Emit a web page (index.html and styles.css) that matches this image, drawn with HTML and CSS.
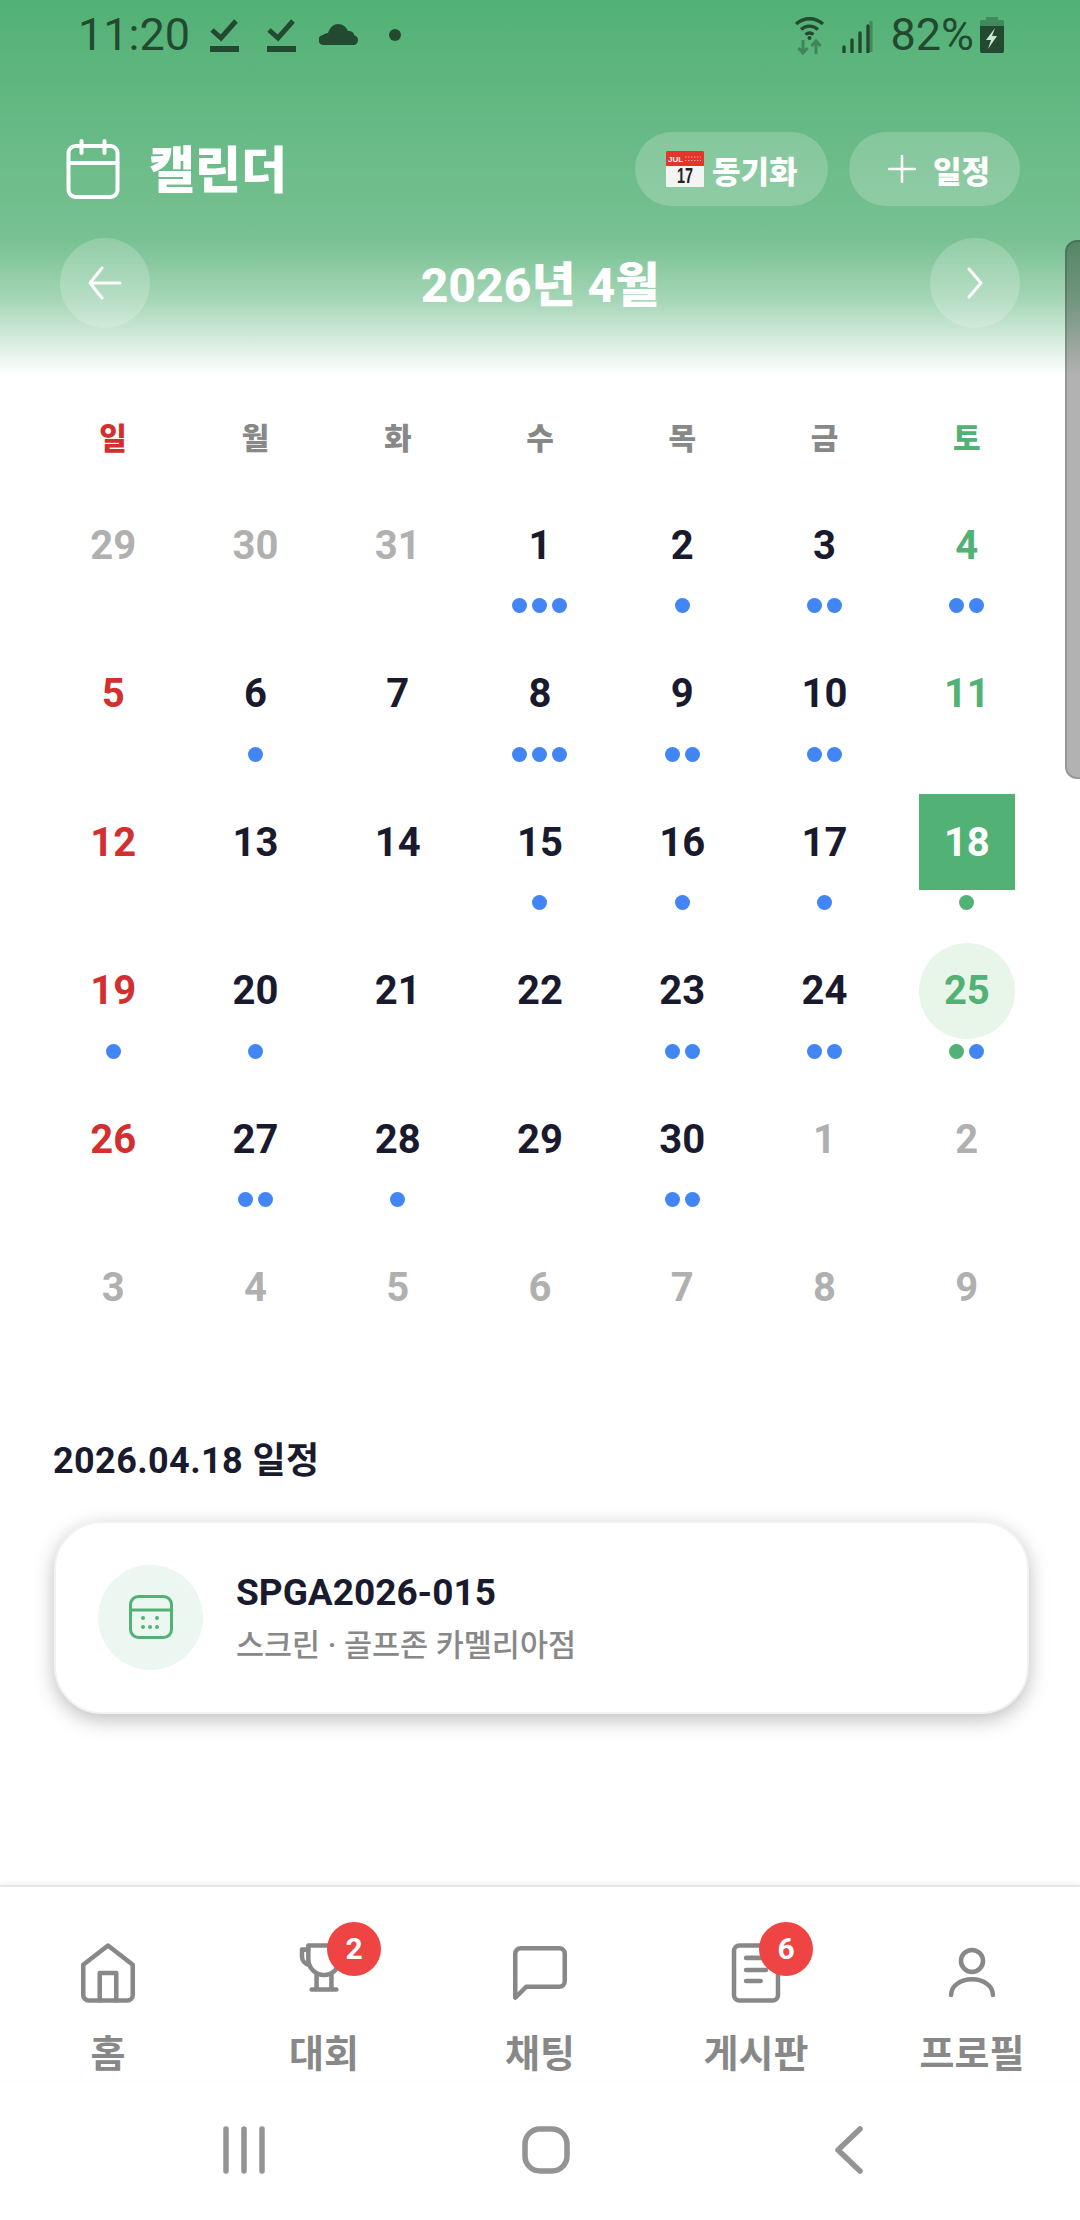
FILE: index.html
```html
<!DOCTYPE html>
<html lang="ko">
<head>
    <meta charset="UTF-8">
    <meta name="viewport" content="width=device-width, initial-scale=1.0">
    <link rel="stylesheet" href="styles.css">
    <title>캘린더</title>
</head>
<body>
    <div class="page">
        <div class="scrollbar"></div>
        <header class="header">
            <div class="status">
                <span class="time">11:20</span>
                <svg class="st_check" viewBox="0 0 29 34"><path d="M2 12l9 8L26 3" fill="none" stroke="#234a30" stroke-width="5"/><rect y="28" width="29" height="6" fill="#234a30"/></svg>
                <svg class="st_check" viewBox="0 0 29 34"><path d="M2 12l9 8L26 3" fill="none" stroke="#234a30" stroke-width="5"/><rect y="28" width="29" height="6" fill="#234a30"/></svg>
                <svg class="st_cloud" viewBox="0 0 39 21"><path d="M5 21a5 5 0 0 1-1-10 c1-1 3-2 5-2 C11 3 15 0 19 0c5 0 8 3 10 7 4 0 6 2 6 4 3 1 4 3 4 5 0 3-2 5-5 5z" fill="#234a30"/></svg>
                <span class="st_dot"></span>
                <span class="st_space"></span>
                <svg class="st_wifi" viewBox="0 0 31 40">
                    <path d="M2 9c8-7 19-7 27 0M7 14.500c5-4.500 12-4.500 17 0M11.500 19.500c2.500-2 5.500-2 8 0" fill="none" stroke="#234a30" stroke-width="3.400"/>
                    <circle cx="15.500" cy="23" r="2" fill="#234a30"/>
                    <path d="M9 25v13M4.500 33l4.500 5 4.500-5M22 39V26M17.500 31l4.500-5 4.500 5" fill="none" stroke="#234a30" stroke-width="3" opacity="0.450"/>
                </svg>
                <svg class="st_signal" viewBox="0 0 31 34">
                    <g fill="none" stroke="#234a30" stroke-width="3.400" stroke-linecap="round">
                        <path d="M2 33v-5M10 33V21M18 33V14M26 33V7"/>
                    </g>
                    <path d="M29 33V2" fill="none" stroke="#234a30" stroke-width="3" opacity="0.400"/>
                </svg>
                <span class="percent">82%</span>
                <svg class="st_battery" viewBox="0 0 24 36">
                    <path d="M6 0h12v3h4a2 2 0 0 1 2 2v5H0V5a2 2 0 0 1 2-2h4z" fill="#234a30" opacity="0.400"/>
                    <path d="M0 9h24v25a2 2 0 0 1-2 2H2a2 2 0 0 1-2-2z" fill="#234a30"/>
                    <path d="M15 11l-9 12h5l-3 9 9-13h-5l3-8z" fill="#c9e8d3"/>
                </svg>
            </div>

            <div class="head_row">
                <svg class="head_icon" viewBox="0 0 53 60">
                    <g fill="none" stroke="#fff" stroke-width="4" stroke-linecap="round">
                        <rect x="2" y="7" width="49" height="51" rx="7"/>
                        <path d="M2 24h49M15 2v12M38 2v12"/>
                    </g>
                </svg>
                <h1 class="head_title">캘린더</h1>
                <button class="head_btn sync">
                    <svg class="emoji" viewBox="0 0 38 36">
                        <rect width="38" height="36" rx="1" fill="#f4f4f2"/>
                        <path d="M0 1a1 1 0 0 1 1-1h36a1 1 0 0 1 1 1v14H0z" fill="#e5352b"/>
                        <text x="2" y="11" class="emoji_mon">JUL</text>
                        <path d="M19 6h16M19 9.500h16" stroke="#f6a9a2" stroke-width="1" stroke-dasharray="1.500 1.500"/>
                        <text x="19" y="32" class="emoji_day" textLength="16" lengthAdjust="spacingAndGlyphs">17</text>
                    </svg>
                    동기화
                </button>
                <button class="head_btn add">
                    <svg class="plus" viewBox="0 0 28 28"><path d="M14 1v26M1 14h26" stroke="#fff" stroke-width="2.500" stroke-linecap="round"/></svg>
                    일정
                </button>
            </div>

            <div class="month_row">
                <button class="month_btn">
                    <svg viewBox="0 0 34 34"><path d="M32 17H3M14 2L2 17l12 15" fill="none" stroke="#fff" stroke-width="3" stroke-linecap="round" stroke-linejoin="round"/></svg>
                </button>
                <h2 class="month_title">2026년 4월</h2>
                <button class="month_btn">
                    <svg viewBox="0 0 34 34"><path d="M11 3l12 14-12 14" fill="none" stroke="#fff" stroke-width="3" stroke-linecap="round" stroke-linejoin="round"/></svg>
                </button>
            </div>
        </header>

        <main class="main">
            <section class="calendar">
                <div class="week">
                    <span class="sun">일</span><span>월</span><span>화</span><span>수</span><span>목</span><span>금</span><span class="sat">토</span>
                </div>
                <div class="days">
                    <div class="day other"><span class="num">29</span></div>
                    <div class="day other"><span class="num">30</span></div>
                    <div class="day other"><span class="num">31</span></div>
                    <div class="day"><span class="num">1</span><div class="dots"><i></i><i></i><i></i></div></div>
                    <div class="day"><span class="num">2</span><div class="dots"><i></i></div></div>
                    <div class="day"><span class="num">3</span><div class="dots"><i></i><i></i></div></div>
                    <div class="day sat"><span class="num">4</span><div class="dots"><i></i><i></i></div></div>

                    <div class="day sun"><span class="num">5</span></div>
                    <div class="day"><span class="num">6</span><div class="dots"><i></i></div></div>
                    <div class="day"><span class="num">7</span></div>
                    <div class="day"><span class="num">8</span><div class="dots"><i></i><i></i><i></i></div></div>
                    <div class="day"><span class="num">9</span><div class="dots"><i></i><i></i></div></div>
                    <div class="day"><span class="num">10</span><div class="dots"><i></i><i></i></div></div>
                    <div class="day sat"><span class="num">11</span></div>

                    <div class="day sun"><span class="num">12</span></div>
                    <div class="day"><span class="num">13</span></div>
                    <div class="day"><span class="num">14</span></div>
                    <div class="day"><span class="num">15</span><div class="dots"><i></i></div></div>
                    <div class="day"><span class="num">16</span><div class="dots"><i></i></div></div>
                    <div class="day"><span class="num">17</span><div class="dots"><i></i></div></div>
                    <div class="day selected"><span class="num">18</span><div class="dots"><i class="green"></i></div></div>

                    <div class="day sun"><span class="num">19</span><div class="dots"><i></i></div></div>
                    <div class="day"><span class="num">20</span><div class="dots"><i></i></div></div>
                    <div class="day"><span class="num">21</span></div>
                    <div class="day"><span class="num">22</span></div>
                    <div class="day"><span class="num">23</span><div class="dots"><i></i><i></i></div></div>
                    <div class="day"><span class="num">24</span><div class="dots"><i></i><i></i></div></div>
                    <div class="day today"><span class="num">25</span><div class="dots"><i class="green"></i><i></i></div></div>

                    <div class="day sun"><span class="num">26</span></div>
                    <div class="day"><span class="num">27</span><div class="dots"><i></i><i></i></div></div>
                    <div class="day"><span class="num">28</span><div class="dots"><i></i></div></div>
                    <div class="day"><span class="num">29</span></div>
                    <div class="day"><span class="num">30</span><div class="dots"><i></i><i></i></div></div>
                    <div class="day other"><span class="num">1</span></div>
                    <div class="day other"><span class="num">2</span></div>

                    <div class="day other"><span class="num">3</span></div>
                    <div class="day other"><span class="num">4</span></div>
                    <div class="day other"><span class="num">5</span></div>
                    <div class="day other"><span class="num">6</span></div>
                    <div class="day other"><span class="num">7</span></div>
                    <div class="day other"><span class="num">8</span></div>
                    <div class="day other"><span class="num">9</span></div>
                </div>
            </section>

            <section class="schedule">
                <h3 class="schedule_title">2026.04.18 일정</h3>
                <div class="card">
                    <div class="card_icon">
                        <svg viewBox="0 0 44 44">
                            <g fill="none" stroke="#52b175" stroke-width="3">
                                <rect x="1.500" y="1.500" width="41" height="41" rx="8"/>
                                <path d="M1.500 15h41"/>
                            </g>
                            <g fill="#52b175">
                                <circle cx="14" cy="23" r="2"/><circle cx="28" cy="23" r="2"/>
                                <circle cx="14" cy="32" r="2"/><circle cx="21" cy="32" r="2"/><circle cx="28" cy="32" r="2"/>
                            </g>
                        </svg>
                    </div>
                    <div class="card_text">
                        <p class="card_name">SPGA2026-015</p>
                        <p class="card_sub">스크린 · 골프존 카멜리아점</p>
                    </div>
                </div>
            </section>
        </main>

        <nav class="tabs">
            <div class="tab">
                <svg class="tab_icon" viewBox="0 0 24 24"><path d="M3 9l9-7 9 7v11a2 2 0 0 1-2 2H5a2 2 0 0 1-2-2z"/><path d="M9 22V12h6v10"/></svg>
                <span>홈</span>
            </div>
            <div class="tab">
                <svg class="tab_icon" viewBox="0 0 24 24"><path d="M6.300 2h11.400v5a5.700 5.700 0 0 1-11.400 0z"/><path d="M6.300 3.500H4v2.500a3 3 0 0 0 2.500 3M9.300 12.500V18M14.700 12.500V18M7.500 18h9"/></svg>
                <b class="badge">2</b>
                <span>대회</span>
            </div>
            <div class="tab">
                <svg class="tab_icon" viewBox="0 0 24 24"><path d="M21 15a2 2 0 0 1-2 2H7l-4 4V5a2 2 0 0 1 2-2h14a2 2 0 0 1 2 2z"/></svg>
                <span>채팅</span>
            </div>
            <div class="tab">
                <svg class="tab_icon" viewBox="0 0 24 24"><rect x="4" y="2" width="16" height="20" rx="2"/><path d="M8.400 6.500h7.200M8.400 10.900h7.200M8.400 14.900h5.300"/></svg>
                <b class="badge">6</b>
                <span>게시판</span>
            </div>
            <div class="tab">
                <svg class="tab_icon" viewBox="0 0 24 24"><circle cx="12" cy="7.600" r="4"/><path d="M4.400 20c0-3.300 3.400-5.700 7.600-5.700s7.600 2.400 7.600 5.700"/></svg>
                <span>프로필</span>
            </div>
        </nav>

        <div class="sysnav">
            <svg viewBox="0 0 48 48"><path d="M6 3v42M24 3v42M42 3v42"/></svg>
            <svg viewBox="0 0 48 48"><rect x="3" y="3" width="42" height="42" rx="15"/></svg>
            <svg viewBox="0 0 48 48"><path d="M36 3L14 24l22 21"/></svg>
        </div>
    </div>
</body>
</html>
```

FILE: styles.css
```css
*{
    margin: 0;
    padding: 0;
    box-sizing: border-box;
}
body{
    background-color: #fff;
    font-family: Roboto, "Noto Sans CJK KR", sans-serif;
    overflow: hidden;
}
.page{
    position: relative;
    display: flex;
    flex-direction: column;
    height: 2220px;
}
.scrollbar{
    position: absolute;
    top: 240px;
    right: 0;
    width: 15px;
    height: 539px;
    background-color: rgba(0, 0, 0, 0.3);
    border: 2px solid rgba(0, 0, 0, 0.15);
    border-right: 0;
    border-radius: 12px 0 0 12px;
}

/* header */
.header{
    height: 375px;
    background: linear-gradient(180deg, #52b175 0, #78c192 240px, #a5d6b6 300px, #fff 375px);
}
.status{
    display: flex;
    align-items: center;
    height: 70px;
    padding-left: 78px;
    color: #234a30;
}
.time{
    font-size: 45px;
    line-height: 70px;
    width: 132px;
}
.st_check{
    width: 29px;
    height: 34px;
    margin-right: 28px;
}
.st_cloud{
    width: 39px;
    height: 21px;
    margin-left: -5px;
    margin-top: -2px;
}
.st_dot{
    width: 12px;
    height: 12px;
    margin-left: 31px;
    border-radius: 50%;
    background-color: #234a30;
}
.st_space{
    flex: 1;
}
.st_wifi{
    width: 31px;
    height: 40px;
}
.st_signal{
    width: 31px;
    height: 34px;
    margin-left: 17px;
    margin-top: 2px;
}
.percent{
    font-size: 45px;
    line-height: 70px;
    margin-left: 17px;
}
.st_battery{
    width: 24px;
    height: 36px;
    margin-left: 6px;
    margin-right: 76px;
}
.head_row{
    display: flex;
    align-items: center;
    height: 74px;
    margin-top: 62px;
    padding: 0 60px 0 66px;
}
.head_icon{
    width: 54px;
    height: 60px;
}
.head_title{
    flex: 1;
    margin-left: 29px;
    margin-bottom: 6px;
    font-size: 50px;
    font-weight: 900;
    color: #fff;
}
.head_btn{
    display: flex;
    align-items: center;
    height: 74px;
    border: 0;
    border-radius: 37px;
    background-color: rgba(255, 255, 255, 0.2);
    font-family: inherit;
    font-size: 31px;
    font-weight: 900;
    color: #fff;
}
.sync{
    width: 193px;
    padding-left: 31px;
    gap: 8px;
}
.add{
    width: 171px;
    margin-left: 21px;
    padding-left: 39px;
    gap: 17px;
}
.emoji{
    width: 38px;
    height: 36px;
    overflow: visible;
}
.emoji_mon{
    font-family: "Liberation Sans", sans-serif;
    font-size: 8px;
    font-weight: 700;
    fill: #fff;
}
.emoji_day{
    font-family: "Liberation Sans", sans-serif;
    font-size: 22px;
    font-weight: 700;
    fill: #222;
    text-anchor: middle;
}
.plus{
    width: 28px;
    height: 28px;
}
.month_row{
    display: flex;
    justify-content: space-between;
    align-items: center;
    margin-top: 32px;
    padding: 0 60px;
}
.month_btn{
    display: flex;
    justify-content: center;
    align-items: center;
    width: 90px;
    height: 90px;
    border: 0;
    border-radius: 50%;
    background-color: rgba(255, 255, 255, 0.2);
}
.month_btn svg{
    width: 34px;
    height: 34px;
}
.month_title{
    margin-bottom: 4px;
    font-size: 48px;
    font-weight: 800;
    color: #fff;
}

/* calendar */
.main{
    flex: 1;
}
.calendar{
    padding: 0 42px;
}
.week,
.days{
    display: grid;
    grid-template-columns: repeat(7, 1fr);
}
.week{
    height: 44px;
    margin-top: 42px;
    margin-bottom: 36px;
    text-align: center;
    font-size: 30px;
    font-weight: 900;
    line-height: 44px;
    color: #888;
}
.week .sun{
    color: #d32f2f;
}
.week .sat{
    color: #52b175;
}
.days{
    row-gap: 32.600px;
}
.day{
    display: flex;
    flex-direction: column;
    align-items: center;
    height: 116px;
    color: #1a1a2e;
}
.num{
    display: flex;
    justify-content: center;
    align-items: center;
    width: 96px;
    height: 96px;
    font-size: 40px;
    font-weight: 700;
}
.day.sun{
    color: #d32f2f;
}
.day.sat{
    color: #52b175;
}
.day.other{
    color: #b0b0b0;
}
.day.selected .num{
    background-color: #52b175;
    color: #fff;
}
.day.today .num{
    background-color: #e8f5e9;
    border-radius: 50%;
    color: #52b175;
}
.dots{
    display: flex;
    gap: 5px;
    margin-top: 5px;
}
.dots i{
    width: 15px;
    height: 15px;
    border-radius: 50%;
    background-color: #4285f4;
}
.dots .green{
    background-color: #52b175;
}

/* schedule */
.schedule{
    padding: 0 53px;
    margin-top: 83px;
}
.schedule_title{
    font-size: 36px;
    font-weight: 700;
    line-height: 44px;
    letter-spacing: 0.4px;
    color: #1a1a2e;
}
.card{
    display: flex;
    align-items: center;
    gap: 33px;
    width: 975px;
    height: 193px;
    margin-top: 38px;
    margin-left: 1px;
    padding-left: 42px;
    border: 2px solid #f2f2f2;
    border-radius: 48px;
    background-color: #fff;
    box-shadow: 0 6px 20px rgba(0, 0, 0, 0.26);
}
.card_icon{
    display: flex;
    justify-content: center;
    align-items: center;
    width: 105px;
    height: 105px;
    border-radius: 50%;
    background-color: #edf7f1;
}
.card_icon svg{
    width: 44px;
    height: 44px;
}
.card_text{
    padding-top: 1px;
}
.card_name{
    font-size: 37px;
    font-weight: 700;
    line-height: 44px;
    color: #1a1a2e;
}
.card_sub{
    margin-top: 13px;
    font-size: 30.500px;
    font-weight: 500;
    line-height: 36px;
    color: #888;
}

/* bottom tabs */
.tabs{
    display: grid;
    grid-template-columns: repeat(5, 1fr);
    height: 195px;
    padding-top: 53px;
    border-top: 2px solid #e6e6e6;
    box-shadow: 0 -2px 6px rgba(0, 0, 0, 0.05);
}
.tab{
    position: relative;
    display: flex;
    flex-direction: column;
    align-items: center;
    font-size: 38px;
    font-weight: 700;
    line-height: 44px;
    color: #888;
}
.tab span{
    margin-top: 26px;
}
.tab_icon{
    width: 66px;
    height: 66px;
    fill: none;
    stroke: #888;
    stroke-width: 1.650;
    stroke-linecap: round;
    stroke-linejoin: round;
}
.badge{
    position: absolute;
    top: -18px;
    left: calc(50% + 3px);
    width: 54px;
    height: 54px;
    border-radius: 50%;
    background-color: #ef4444;
    text-align: center;
    font-size: 30px;
    font-weight: 700;
    line-height: 54px;
    color: #fff;
}
.sysnav{
    display: grid;
    grid-template-columns: repeat(3, 302px);
    justify-items: center;
    align-items: center;
    height: 140px;
    padding-left: 93px;
}
.sysnav svg{
    width: 48px;
    height: 48px;
    fill: none;
    stroke: #949494;
    stroke-width: 5.500;
    stroke-linecap: round;
    stroke-linejoin: round;
}
```
